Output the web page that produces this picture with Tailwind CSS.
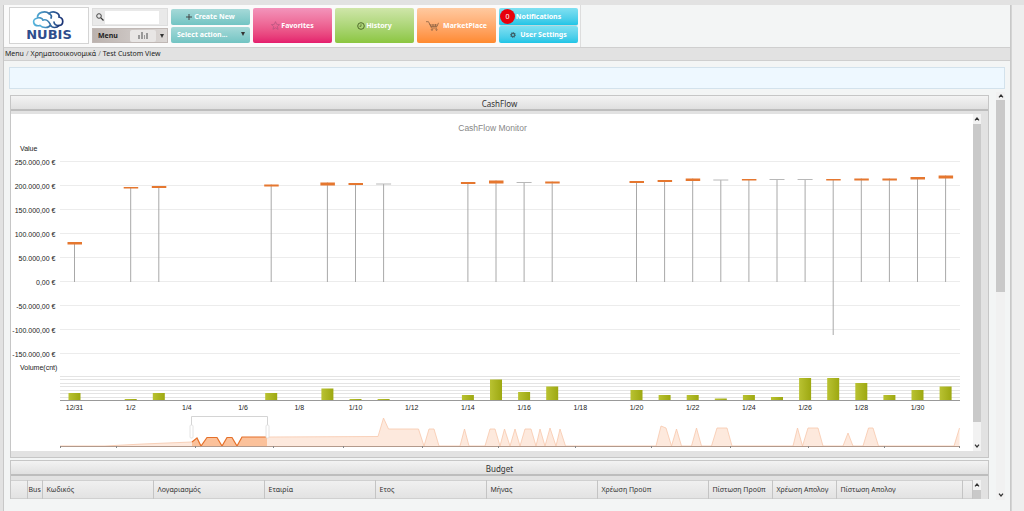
<!DOCTYPE html>
<html lang="el">
<head>
<meta charset="utf-8">
<title>Test Custom View</title>
<script src="https://cdn.jsdelivr.net/npm/@tailwindcss/browser@4"></script>
</head>
<body class="bg-[#e2e2e2] font-['Noto_Sans',sans-serif] text-[7px] leading-[10px] text-[#333]">
<div class="flex h-screen overflow-hidden pt-[5px] pl-[3px]">
  <div class="flex min-w-0 flex-1 flex-col border-x border-[#c8c8c8] bg-[#f3f5f5]">
    <header class="flex h-[42px] shrink-0">
      <div class="flex gap-[3px] border-r border-[#ddd] bg-[#fafafa] py-[3px] pr-[2px] pl-[5px]">
        <a href="#" aria-label="Nubis" class="-mt-px flex h-[37px] w-[80px] items-center justify-center border border-[#d4d4d4] bg-white">
          <svg width="56" height="33" viewBox="-2 -1 56 33" aria-hidden="true">
            <defs><linearGradient id="sky"><stop offset="0" stop-color="#55b5dd"/><stop offset="1" stop-color="#1b3274"/></linearGradient></defs>
            <g fill="none" stroke="url(#sky)" stroke-width="1.700" stroke-linecap="round">
              <path d="M17 15.500C10 17 9 10 13 8.500C16 7 19 8 20 10M14.500 8C14 2.500 22 0 26 3.500C30 0 37 3 36 7C41 8 41 15 36 15.500C33 16 31 14 31 12"/>
              <path d="M17 15.500C20 18.500 26 18 27.500 15C29 18.500 34 18 36 15.500M20 10C23 9 26 11 27.500 15M26 3.500C28 4.500 29 6 28 8"/>
            </g>
            <text x="26" y="28.500" text-anchor="middle" font-family="DejaVu Sans, sans-serif" font-size="13" font-weight="700" fill="#2f4d8c">NUBIS</text>
          </svg>
        </a>
        <div class="flex w-[76px] flex-col gap-[2px]">
          <label class="flex h-[18px] items-center border border-[#ddd] bg-[#e9e9e9] pl-[3px]">
            <svg width="8" height="8" viewBox="0 0 8 8" fill="none" stroke="#333" stroke-width=".9" aria-hidden="true"><circle cx="3" cy="3" r="2.300"/><path d="M4.700 4.700L7.500 7.500" stroke-width="1.200"/></svg>
            <input aria-label="Search" class="ml-px h-[13px] w-[54px] bg-white outline-none">
          </label>
          <div class="flex h-[15px] items-center border border-[#c0b8b5] bg-linear-to-r from-[#bbb2ae] to-[#dcd8d6] pl-[5px] font-bold">
            <button class="w-[32px] text-left text-[#222]">Menu</button>
            <button aria-label="Charts" class="flex h-[12px] w-[26px] items-center justify-center rounded-[2px] bg-[#e8e6e5]"><svg width="10" height="9" viewBox="0 0 10 9" fill="#999" aria-hidden="true"><path d="M0 4h2v4H0zM3 1h2v7H3zM6 4h1v4H6zM8 2h2v6H8z"/></svg></button>
            <button aria-label="Open menu" class="flex flex-1 justify-center"><svg width="4" height="4" viewBox="0 0 4 4" aria-hidden="true"><path d="M0 0h4L2 4z" fill="#333"/></svg></button>
          </div>
        </div>
        <div class="flex w-[79px] flex-col gap-[2px] pt-px font-bold text-white">
          <button class="flex h-[16px] items-center justify-center gap-[2px] rounded-[2px] bg-linear-to-b from-[#a5d9d8] to-[#72c4c3]"><svg width="6" height="6" viewBox="0 0 6 6" stroke="#444" aria-hidden="true"><path d="M3 0v6M0 3h6"/></svg>Create New</button>
          <div class="relative flex h-[16px] rounded-[2px] bg-linear-to-b from-[#a5d9d8] to-[#72c4c3]">
            <select aria-label="Select action" class="w-full appearance-none pl-[6px] outline-none"><option>Select action...</option></select>
            <svg class="pointer-events-none absolute top-[5px] right-[5px]" width="4" height="4" viewBox="0 0 4 4" aria-hidden="true"><path d="M0 0h4L2 4z" fill="#333"/></svg>
          </div>
        </div>
        <div class="flex gap-[3px] font-bold text-white">
          <button class="flex h-[35px] w-[79px] items-center justify-center gap-px rounded-[2px] bg-linear-to-b from-[#f294bb] to-[#e41c6d]"><svg width="9" height="9" viewBox="0 0 10 10" fill="none" stroke="#b5567f" stroke-width=".8" aria-hidden="true"><path d="M5 .7L6.300 3.700L9.500 4L7.100 6.100L7.800 9.300L5 7.600L2.200 9.300L2.900 6.100L.5 4L3.700 3.700Z"/></svg>Favorites</button>
          <button class="flex h-[35px] w-[79px] items-center justify-center gap-px rounded-[2px] bg-linear-to-b from-[#cfe6a9] to-[#8cc63f]"><svg width="8" height="8" viewBox="0 0 8 8" fill="none" stroke="#4f6a2a" aria-hidden="true"><circle cx="4" cy="4" r="3.300"/><path d="M4 2.200V4.300H2.500" stroke-width=".8"/></svg>History</button>
          <button class="flex h-[35px] w-[79px] items-center justify-center gap-[4px] rounded-[2px] bg-linear-to-b from-[#fec99f] to-[#ff8a2e]"><svg width="13" height="10" viewBox="0 0 13 10" fill="none" stroke="#8f6545" stroke-width=".8" aria-hidden="true"><path d="M0 .7H2.500L5.500 7H11M3.500 2.500L5 5.500H11L12.500 1.800M4.200 4H11.500M7 3V5.500M9.500 3V5.500"/><circle cx="6" cy="8.700" r=".7"/><circle cx="10.500" cy="8.700" r=".7"/></svg>MarketPlace</button>
          <div class="flex w-[79px] flex-col">
            <button class="relative h-[18px] rounded-[2px] border-b border-[#b9d8de] bg-linear-to-b from-[#7fe0f1] to-[#1cc5e6]">Notifications<span class="absolute top-px left-px flex size-[15px] items-center justify-center rounded-full bg-[#e8000b] font-normal">0</span></button>
            <button class="flex h-[17px] items-center justify-center gap-[4px] rounded-[2px] bg-linear-to-b from-[#7fe0f1] to-[#1cc5e6]"><svg width="6" height="6" viewBox="0 0 6 6" fill="none" stroke="#3c626b" aria-hidden="true"><circle cx="3" cy="3" r="1.700" stroke-width="1.400"/><circle cx="3" cy="3" r="2.600" stroke-width=".7" stroke-dasharray="1 1"/></svg>User Settings</button>
          </div>
        </div>
      </div>
    </header>
    <nav aria-label="Breadcrumb" class="flex h-[14px] shrink-0 items-center gap-[2px] border-y border-[#cfcfcf] bg-[#e2e2e2] pl-px text-[#222]"><a href="#">Menu</a><span class="text-[#777]">/</span><a href="#">Χρηματοοικονομικά</a><span class="text-[#777]">/</span><a href="#">Test Custom View</a></nav>
    <div class="mx-[5px] mt-[6px] h-[22px] shrink-0 border border-[#d3e2ec] bg-[#eef8ff]"></div>
    <div class="mr-[5px] ml-[6px] flex h-[411px] shrink-0 gap-[7px] pt-[3px]">
      <main class="flex min-w-0 flex-1 flex-col gap-[2px] overflow-hidden pt-[3px]">
        <section class="shrink-0 border border-[#c6c6c6] bg-[#e2e2e2]">
          <h2 class="h-[15px] border-b-2 border-[#bdbdbd] bg-linear-to-b from-[#f3f3f3] to-[#e0e0e0] text-center text-[8px] leading-[15px]">CashFlow</h2>
          <div class="mt-[3px] mr-[7px] mb-[6px] flex bg-white pl-px">
            <svg id="chart" class="h-auto min-w-0 flex-1" viewBox="12 114 961 337" role="img" aria-label="CashFlow Monitor" font-family="Liberation Sans, sans-serif" font-size="7" fill="#222"></svg>
            <div class="flex w-[8px] flex-col items-center bg-[#f2f2f2]">
              <svg class="my-[3px]" width="6" height="4" viewBox="0 0 6 4" fill="none" stroke="#333" stroke-width="1.200" aria-hidden="true"><path d="M1 3.300L3 1L5 3.300"/></svg>
              <div class="mb-[22px] w-full flex-1 bg-[#c9c9c9]"></div>
              <svg class="mb-[3px]" width="6" height="4" viewBox="0 0 6 4" fill="none" stroke="#333" stroke-width="1.200" aria-hidden="true"><path d="M1 .7L3 3L5 .7"/></svg>
            </div>
          </div>
        </section>
        <section class="shrink-0 border border-b-0 border-[#c6c6c6] bg-[#e2e2e2]">
          <h2 class="h-[15px] border-b-2 border-[#bdbdbd] bg-linear-to-b from-[#f3f3f3] to-[#e0e0e0] text-center text-[8px] leading-[15px]">Budget</h2>
          <div class="mt-[4px] mr-[7px] flex">
            <table class="w-full flex-1 table-fixed border-collapse">
              <colgroup><col class="w-[16px]"><col class="w-[15px]"><col class="w-[111px]"><col class="w-[111px]"><col class="w-[111px]"><col class="w-[111px]"><col class="w-[111px]"><col class="w-[111px]"><col class="w-[64px]"><col class="w-[64px]"><col><col class="w-[10px]"></colgroup>
              <thead class="bg-linear-to-b from-[#f0f0f0] to-[#e2e2e2]">
                <tr class="h-[17px] border-y border-[#d0d0d0] text-left whitespace-nowrap [&>th]:border-r [&>th]:border-[#c4c4c4] [&>th]:pl-[4px] [&>th]:font-normal [&>th:nth-child(2)]:pl-px">
                  <th></th><th>Bus</th><th>Κωδικός</th><th>Λογαριασμός</th><th>Εταιρία</th><th>Ετος</th><th>Μήνας</th><th>Χρέωση Προϋπ</th><th>Πίστωση Προϋπ</th><th>Χρέωση Απολογ</th><th>Πίστωση Απολογ</th><th></th>
                </tr>
              </thead>
            </table>
            <div class="flex h-[19px] w-[8px] flex-col items-center bg-[#f2f2f2]">
              <svg class="my-[3px]" width="6" height="4" viewBox="0 0 6 4" fill="none" stroke="#333" stroke-width="1.200" aria-hidden="true"><path d="M1 3.300L3 1L5 3.300"/></svg>
              <div class="w-full flex-1 bg-[#c9c9c9]"></div>
            </div>
          </div>
        </section>
      </main>
      <div class="flex w-[9px] shrink-0 flex-col items-center bg-[#f1f1f1]">
        <svg class="my-[2px] shrink-0" width="6" height="4" viewBox="0 0 6 4" fill="none" stroke="#333" stroke-width="1.200" aria-hidden="true"><path d="M1 3.300L3 1L5 3.300"/></svg>
        <div class="h-[192px] w-full bg-[#c9c9c9]"></div>
        <svg class="mt-auto mb-[3px]" width="6" height="4" viewBox="0 0 6 4" fill="none" stroke="#333" stroke-width="1.200" aria-hidden="true"><path d="M1 .7L3 3L5 .7"/></svg>
      </div>
    </div>
  </div>
  <div class="w-[13px] shrink-0 border-l border-[#d4d4d4] bg-[#eee]"></div>
</div>
<script>
const x = day => 74.5 + 28.1 * day;
let out = '<defs><linearGradient id="bar"><stop offset="0" stop-color="#b9c232"/><stop offset="1" stop-color="#9da811"/></linearGradient></defs>';
out += '<text x="492.500" y="131" font-size="8.500" text-anchor="middle" fill="#888">CashFlow Monitor</text>';
out += '<text x="20" y="151">Value</text><text x="20" y="370">Volume(cnt)</text>';
['250.000,00 €','200.000,00 €','150.000,00 €','100.000,00 €','50.000,00 €','0,00 €','-50.000,00 €','-100.000,00 €','-150.000,00 €'].forEach((label, i) => {
  const y = 162 + 24 * i;
  out += `<text x="55.500" y="${y + 2.5}" text-anchor="end">${label}</text><path d="M60 ${y - .5}H960" stroke="#ececec"/>`;
});
[376.5,379.5,383.5,386.5,390.5,393.5,397.5].forEach(y => out += `<path d="M60 ${y}H960" stroke="#e4e4e4"/>`);
// [day, candle top, candle height (0 = unchanged), volume bar top]
[[0,242,2.5,393],[2,187,1.5,399],[3,186,2,393],[7,184.5,2,393],[9,182.5,3,388.5],[10,183,2,399],[11,184,0,399],[14,182,2,395],[15,180.5,3,379.5],[16,182.5,0,392],[17,181.5,2,386.5],[20,181,2,390],[21,180,2,395],[22,178.5,2.5,395],[23,180,0,398.5],[24,179,1.5,395],[25,179.5,0,397],[26,179.5,0,378],[27,179,1.5,378],[28,178.5,2,383],[29,178.5,2,395],[30,177,2.5,390],[31,175.5,3,386.5]].forEach(([d, top, h, vol]) => {
  const low = d === 27 ? 335 : 282;
  out += `<path d="M${x(d)} ${top}V${low}" stroke="#a8a8a8"/>`;
  out += h ? `<rect x="${x(d) - 7}" y="${top}" width="14.500" height="${h}" fill="#e5772f"/>` : `<path d="M${x(d) - 7.5} ${top}h15" stroke="#b8b8b8"/>`;
  out += `<rect x="${x(d) - 6}" y="${vol}" width="12" height="${400.5 - vol}" fill="url(#bar)"/>`;
});
out += '<path d="M60 400.500H960" stroke="#999"/>';
for (let d = 0; d <= 30; d += 2) out += `<text x="${x(d)}" y="409.500" text-anchor="middle">${d ? '1/' + d : '12/31'}</text>`;
// Overview strip
const rest = '267,437 378,436.5 383.5,418 388.5,429 418.5,429 424,446 429,429 434,429 439,446 460,446 464.5,429 469,446 485,446 490,429 495,429 500,446 504.500,429 510,446 515,429 520,446 525,429 531,429 536,446 540,429 545,446 550,428 556,446 560,429 565.500,446 656,446 661,426 666,428 671.500,446 676.500,429 681.500,446 691.500,446 696.500,428 701.500,446 711.500,446 717,428 727,428 732,446 793,446 797.500,428 802.500,446 808,428 818,428 823,446 843,446 848,433 853,446 863,446 868.500,428 873,428 878.500,446 954,446 959.500,428';
const picked = '192,442 197,438 201,446 207,437.5 217,437.5 222,446 227,437.5 232,437.5 237,446 242,437 267,437';
const start = '60,446 105,446 143,444 192,442';
out += `<polygon points="${start} 192,446 60,446" fill="#fde9dd"/><polyline points="${start}" fill="none" stroke="#f8d0b8"/>`;
out += `<polygon points="${rest} 959.5,446 267,446" fill="#fde9dd"/><polyline points="${rest}" fill="none" stroke="#f7c8ac" stroke-width=".8"/>`;
out += `<polygon points="${picked} 267,446 192,446" fill="#fbc19a"/><polyline points="${picked}" fill="none" stroke="#e5702a" stroke-width="1.200"/>`;
out += '<path d="M191.500 425V416.500H267.500V425" fill="none" stroke="#d4d4d4"/><g fill="#fff" stroke="#ddd" stroke-width=".8"><rect x="190" y="425" width="3" height="13" rx="1"/><rect x="266" y="425" width="3" height="13" rx="1"/></g>';
out += '<path d="M60 446.500H960" stroke="#b39a8c"/>';
[60,116,195,273,343,422,498,575,651,730,808,884,959].forEach(t => out += `<path d="M${t + .5} 446V448" stroke="#888"/>`);
document.getElementById('chart').innerHTML = out;
</script>
</body>
</html>
